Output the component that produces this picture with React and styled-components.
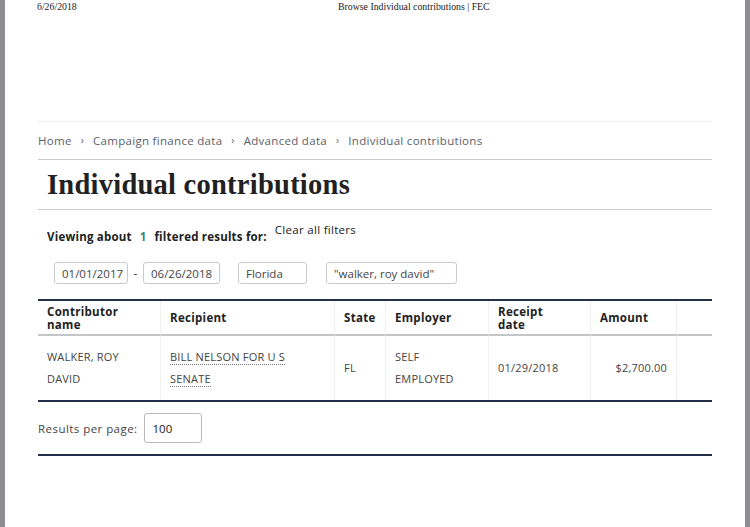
import React from "react";
import styled, { createGlobalStyle } from "styled-components";

const Global = createGlobalStyle`
  html, body { margin: 0; padding: 0; background: #8d8d93; }
  body { font-family: "Open Sans", "Liberation Sans", sans-serif; }
  * { box-sizing: border-box; }
`;

const Page = styled.div`
  margin: 0 5px;
  width: 740px;
  height: 527px;
  background: #fff;
  overflow: hidden;
`;

const PrintHeader = styled.div`
  display: grid;
  grid-template-columns: 301px 1fr;
  height: 14px;
  padding: 1px 0 0 32px;
  font-family: "Liberation Serif", serif;
  font-size: 9.8px;
  color: #222;
  line-height: 12px;
`;

const Content = styled.div`
  padding: 107px 33px 0 33px;
`;

const Rule = styled.div`
  height: ${(p) => p.$h || 1}px;
  background: ${(p) => p.$c || "#d6d7d9"};
`;

const Breadcrumb = styled.nav`
  display: flex;
  align-items: center;
  height: 37px;
  padding-bottom: 1px;
  font-size: 11.5px;
  color: #5b616b;
  letter-spacing: 0.3px;
`;

const Sep = styled.span`
  margin: 0 9px;
  font-size: 10px;
`;

const Title = styled.h1`
  margin: 0;
  height: 49px;
  padding-left: 9px;
  display: flex;
  align-items: center;
  font-family: "Liberation Serif", serif;
  font-weight: bold;
  font-size: 28.5px;
  color: #212121;
  letter-spacing: 0.25px;
`;

const Summary = styled.div`
  display: flex;
  align-items: flex-start;
  padding: 12px 0 0 9px;
  height: 52px;
  font-size: 11.5px;
  color: #212121;
`;

const Viewing = styled.span`
  font-weight: bold;
  margin-top: 7px;
  margin-right: 8px;
  letter-spacing: 0.2px;
`;

const Count = styled.span`
  color: #3b8686;
  margin: 0 8px;
`;

const Clear = styled.span`
  font-weight: normal;
  letter-spacing: 0.3px;
`;

const Tags = styled.div`
  display: flex;
  align-items: center;
  padding-left: 16px;
  height: 22px;
`;

const Tag = styled.div`
  height: 22px;
  width: ${(p) => p.$w}px;
  margin-right: ${(p) => p.$mr || 0}px;
  border: 1px solid #c9cacc;
  border-radius: 3px;
  padding-left: 7px;
  display: flex;
  align-items: center;
  font-size: 11.5px;
  color: #444;
`;

const Dash = styled.span`
  width: 15px;
  text-align: center;
  font-size: 12px;
  color: #444;
`;

const Table = styled.div`
  margin-top: 15px;
  border-top: 2px solid #233049;
  border-bottom: 2px solid #233049;
  display: grid;
  grid-template-columns: 122px 174px 51px 103px 102px 86px 36px;
`;

const Th = styled.div`
  height: 35px;
  padding: 0 9px;
  display: flex;
  align-items: center;
  font-size: 11.5px;
  font-weight: bold;
  color: #212121;
  line-height: 13px;
  letter-spacing: 0.3px;
  white-space: pre-line;
  border-left: ${(p) => (p.$first ? "none" : "1px solid #f1f1f1")};
  border-bottom: 2px solid #c4c5c8;
`;

const Td = styled.div`
  height: 64px;
  padding: 0 9px;
  display: flex;
  align-items: center;
  justify-content: ${(p) => (p.$right ? "flex-end" : "flex-start")};
  font-size: 11px;
  color: #444;
  line-height: 22px;
  letter-spacing: 0.2px;
  border-left: ${(p) => (p.$first ? "none" : "1px solid #f1f1f1")};
`;

const Link = styled.span`
  border-bottom: 1px dotted #777;
  line-height: 16px;
  display: inline;
`;

const LinkWrap = styled.div`
  line-height: 22px;
`;

const Footer = styled.div`
  display: flex;
  align-items: center;
  height: 52px;
  font-size: 11.5px;
  color: #444;
  letter-spacing: 0.45px;
`;

const Select = styled.div`
  width: 58px;
  height: 30px;
  margin-left: 6px;
  border: 1px solid #b9babd;
  border-radius: 3px;
  padding-left: 8px;
  display: flex;
  align-items: center;
  color: #212121;
  letter-spacing: 0;
`;

const headers = ["Contributor\nname", "Recipient", "State", "Employer", "Receipt\ndate", "Amount", ""];

export default function App() {
  return (
    <>
      <Global />
      <Page>
        <PrintHeader>
          <span>6/26/2018</span>
          <span>Browse Individual contributions | FEC</span>
        </PrintHeader>
        <Content>
          <Rule $c="#eeeeee" />
          <Breadcrumb>
            Home<Sep>›</Sep>Campaign finance data<Sep>›</Sep>Advanced data<Sep>›</Sep>Individual contributions
          </Breadcrumb>
          <Rule $c="#c9cacc" />
          <Title>Individual contributions</Title>
          <Rule $c="#c9cacc" />
          <Summary>
            <Viewing>
              Viewing about<Count>1</Count>filtered results for:
            </Viewing>
            <Clear>Clear all filters</Clear>
          </Summary>
          <Tags>
            <Tag $w={74}>01/01/2017</Tag>
            <Dash>-</Dash>
            <Tag $w={77} $mr={18}>06/26/2018</Tag>
            <Tag $w={69} $mr={19}>Florida</Tag>
            <Tag $w={131}>"walker, roy david"</Tag>
          </Tags>
          <Table>
            {headers.map((h, i) => (
              <Th key={i} $first={i === 0}>{h}</Th>
            ))}
            <Td $first>
              <div>WALKER, ROY<br />DAVID</div>
            </Td>
            <Td>
              <LinkWrap>
                <Link>BILL NELSON FOR U S</Link>
                <br />
                <Link>SENATE</Link>
              </LinkWrap>
            </Td>
            <Td>FL</Td>
            <Td>
              <div>SELF<br />EMPLOYED</div>
            </Td>
            <Td>01/29/2018</Td>
            <Td $right>$2,700.00</Td>
            <Td />
          </Table>
          <Footer>
            Results per page:
            <Select>100</Select>
          </Footer>
          <Rule $h={2} $c="#233049" />
        </Content>
      </Page>
    </>
  );
}
